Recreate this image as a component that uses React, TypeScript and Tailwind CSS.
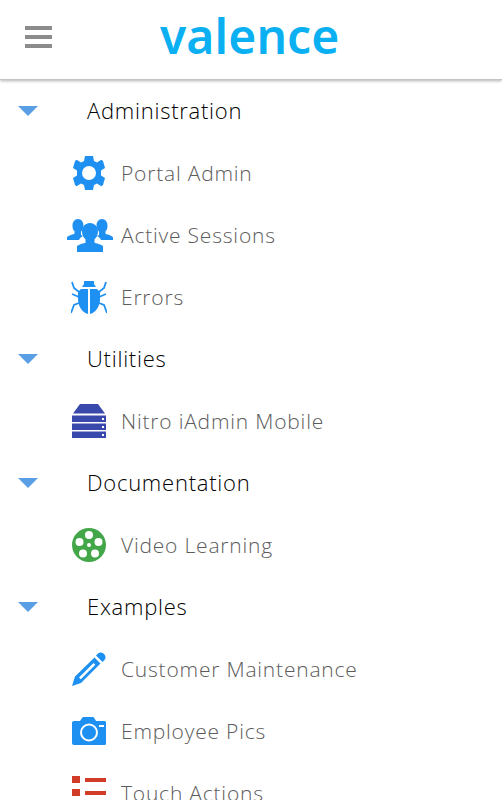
const Gear = () => (
  <svg viewBox="0 0 34 34" className="w-[34px] h-[34px]">
    <path fill="#1e90f2" fillRule="evenodd" d="M13 0h8l1 5 3 1.400 4.400-2.600 1.600 1.200 2 7-4 2.500v5l4 2.500-2 7-1.600 1.200-4.400-2.600L22 29l-1 5h-8l-1-5-3-1.400-4.400 2.600L3 29l-2-7 4-2.500v-5L1 12l2-7 1.600-1.200L9 6.400 12 5ZM17 10a7 7 0 1 0 0 14 7 7 0 0 0 0-14Z" />
  </svg>
);
const SidePerson = "M11 1c3.400 0 5.500 3 5.500 6.500 0 2.500-.9 4.700-2.500 6.100v3.400c.8.300 1.500.6 2 .9-2.500 1.200-3.500 2.600-4 4.100H0v-2.500c0-1.400 4.500-2.800 7.500-3.800v-2.600C6 12.200 5.500 10 5.500 7.500 5.500 4 7.600 1 11 1Z";
const Users = () => (
  <svg viewBox="0 0 46 34" className="w-[46px] h-[34px] ml-[1px]">
    <g fill="#1e90f2">
      <path d={SidePerson} />
      <path d={SidePerson} transform="matrix(-1 0 0 1 46 0)" />
      <path d="M23 5c4.800 0 8 3.800 8 8.500 0 3.200-1.300 6-3.500 7.700v3.500c3.500 1 8.500 2.300 8.500 3.800V34H10v-5.500c0-1.500 5-2.800 8.500-3.800v-3.500c-2.200-1.700-3.500-4.500-3.500-7.700C15 8.800 18.200 5 23 5Z" />
    </g>
  </svg>
);
const Bug = () => (
  <svg viewBox="0 0 36 36" className="w-[36px] h-[36px]">
    <g fill="#1e90f2">
      <path d="M13 2h10v3l2 3H11l2-3Z" />
      <path d="M10 10h7v25C11 33.500 7 27 7 20v-7Z" />
      <path d="M26 10h-7v25C25 33.500 29 27 29 20v-7Z" />
    </g>
    <g stroke="#1e90f2" strokeWidth="1.800" fill="none">
      <path d="M1 3l2 6 5 4" />
      <path d="M35 3l-2 6-5 4" />
      <path d="M1 15l7 3" />
      <path d="M35 15l-7 3" />
      <path d="M0 34l3-8 5-2" />
      <path d="M36 34l-3-8-5-2" />
    </g>
  </svg>
);
const Server = () => (
  <svg viewBox="0 0 34 34" className="w-[34px] h-[34px]">
    <g fill="#3949ab">
      <path d="M8 0h18l7 9.500H1Z" />
      <rect x="0" y="11.500" width="34" height="6.500" />
      <rect x="0" y="19.500" width="34" height="6.500" />
      <rect x="0" y="27.500" width="34" height="6.500" />
    </g>
    <g fill="#fff">
      <rect x="30" y="14" width="2" height="2" />
      <rect x="30" y="22" width="2" height="2" />
      <rect x="30" y="30" width="2" height="2" />
    </g>
  </svg>
);
const Film = () => (
  <svg viewBox="0 0 34 34" className="w-[34px] h-[34px]">
    <circle cx="17" cy="17" r="17" fill="#43a74a" />
    <g fill="#fff">
      <circle cx="17" cy="7" r="4" />
      <circle cx="7.500" cy="14" r="4" />
      <circle cx="26.500" cy="14" r="4" />
      <circle cx="11" cy="25.500" r="4" />
      <circle cx="23" cy="25.500" r="4" />
      <circle cx="17" cy="17" r="2" />
    </g>
  </svg>
);
const Pencil = () => (
  <svg viewBox="0 0 34 34" className="w-[34px] h-[34px]">
    <path fill="#1e90f2" fillRule="evenodd" d="M26 1.500c1.500-1.500 4-1.500 6 .5s2 4.500.5 6l-2 2-6.500-6.500ZM22.500 5.500l6 6L9 31l-9 3 3-9.500ZM21.500 11 7 25.500l1.800 1.800L23.300 12.800Z" />
  </svg>
);
const Camera = () => (
  <svg viewBox="0 0 34 28" className="w-[34px] h-[28px]">
    <path fill="#1e90f2" d="M2 4h6l2-3c.3-.6 1-1 1.600-1h9c.8 0 1.400.4 1.700 1l1.700 3h8.500c1.100 0 2 .9 2 2v20c0 1.100-.9 2-2 2H2c-1.100 0-2-.9-2-2V6c0-1.100.9-2 2-2Z" />
    <circle cx="17" cy="15.500" r="8" fill="none" stroke="#fff" strokeWidth="2" />
    <rect x="27" y="8" width="5" height="2" fill="#fff" />
  </svg>
);
const ListIcon = () => (
  <svg viewBox="0 0 34 34" className="w-[34px] h-[34px] mt-[-1px]">
    <g fill="#d03c27">
      <rect x="0" y="0" width="8" height="7" />
      <rect x="0" y="13" width="8" height="7" />
      <rect x="13" y="2" width="21" height="4" />
      <rect x="13" y="15" width="21" height="4" />
    </g>
  </svg>
);

type Item = { kind: "h" | "i"; label: string; icon?: React.ReactNode };
const rows: Item[] = [
  { kind: "h", label: "Administration" },
  { kind: "i", label: "Portal Admin", icon: <Gear /> },
  { kind: "i", label: "Active Sessions", icon: <Users /> },
  { kind: "i", label: "Errors", icon: <Bug /> },
  { kind: "h", label: "Utilities" },
  { kind: "i", label: "Nitro iAdmin Mobile", icon: <Server /> },
  { kind: "h", label: "Documentation" },
  { kind: "i", label: "Video Learning", icon: <Film /> },
  { kind: "h", label: "Examples" },
  { kind: "i", label: "Customer Maintenance", icon: <Pencil /> },
  { kind: "i", label: "Employee Pics", icon: <Camera /> },
  { kind: "i", label: "Touch Actions", icon: <ListIcon /> },
];

export default function App() {
  return (
    <div className="w-[502px] h-[800px] overflow-hidden bg-white font-['Open_Sans',sans-serif]">
      <header className="relative z-10 h-[80px] flex items-center bg-white border-b border-[#c4c4c4] shadow-[0_1px_3px_rgba(0,0,0,0.3)]">
        <div className="ml-[25px] w-[27px] flex flex-col gap-[5px] mb-[5px]">
          <div className="h-[4px] bg-[#8c8c8c]" />
          <div className="h-[4px] bg-[#8c8c8c]" />
          <div className="h-[4px] bg-[#8c8c8c]" />
        </div>
        <div className="ml-[108px] mb-[8px] text-[48px] leading-none font-semibold text-[#0bb0f2] tracking-[0.1px] font-['Noto_Sans',sans-serif]">
          valence
        </div>
      </header>
      <nav>
        {rows.map((r) =>
          r.kind === "h" ? (
            <div key={r.label} className="h-[62px] flex items-center">
              <svg viewBox="0 0 20 10" className="ml-[18px] w-[20px] h-[10px]">
                <path d="M0 0h20L10 10Z" fill="#5a9fe3" />
              </svg>
              <span className="ml-[49px] mb-[2px] text-[22px] leading-[30px] font-light tracking-[0.75px] text-[#000000]">{r.label}</span>
            </div>
          ) : (
            <div key={r.label} className="h-[62px] flex items-center">
              <div className="ml-[64px] w-[50px] flex justify-center shrink-0">{r.icon}</div>
              <span className="ml-[7px] text-[21px] leading-[30px] font-light tracking-[0.8px] text-[#5c5c5c]">{r.label}</span>
            </div>
          ),
        )}
      </nav>
    </div>
  );
}
